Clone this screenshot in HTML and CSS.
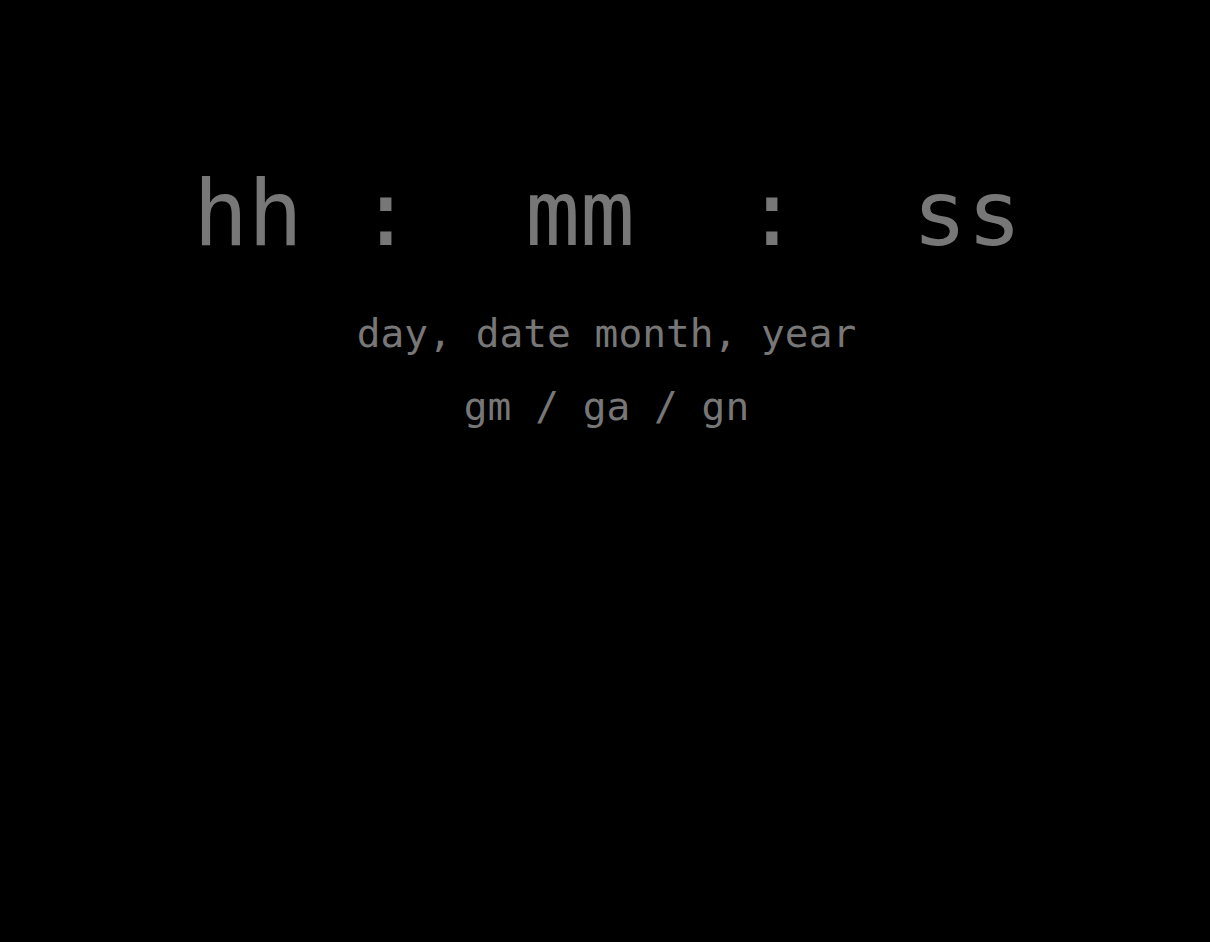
FILE: index.html
```html
<!DOCTYPE html>
<html lang="en">
<head>
<meta charset="utf-8">
<title>Clock</title>
<link rel="stylesheet" href="styles.css">
</head>
<body>
<main class="clock-page">
  <div class="clock">
    <span class="unit">hh</span>
    <span class="sep">:</span>
    <span class="unit">mm</span>
    <span class="sep">:</span>
    <span class="unit">ss</span>
  </div>
  <div class="date">day, date month, year</div>
  <div class="greeting">gm / ga / gn</div>
</main>
</body>
</html>
```
FILE: styles.css
```css
html, body {
  margin: 0;
  padding: 0;
  background: #000;
  height: 100%;
}
body {
  color: #777;
  font-family: "DejaVu Sans Mono", "Liberation Mono", monospace;
}
.clock-page {
  display: flex;
  flex-direction: column;
  padding-top: 164px;
}
.clock {
  display: grid;
  grid-template-columns: 156px 120px 268px 116px 274px;
  padding-left: 170px;
  font-size: 91px;
  line-height: 100px;
}
.clock .unit,
.clock .sep {
  text-align: center;
}
.date,
.greeting {
  text-align: center;
  font-size: 39.5px;
  line-height: 73px;
  padding-left: 3px;
}
.date {
  margin-top: 33px;
}
```
